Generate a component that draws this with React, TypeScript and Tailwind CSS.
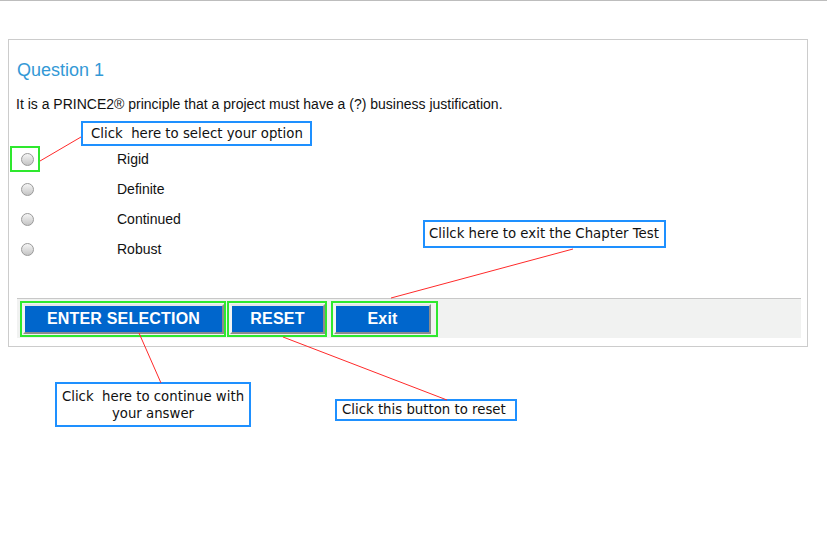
import React from "react";

const options = ["Rigid", "Definite", "Continued", "Robust"];

const callout =
  "absolute bg-white border-2 border-[#1e90ff] text-[13.3px] text-[#111] whitespace-pre font-['DejaVu_Sans',sans-serif]";

function Radio() {
  return (
    <span className="block w-[13px] h-[13px] rounded-full border border-[#9a9a9a] bg-linear-to-b from-[#f6f6f6] to-[#c4c4c4]" />
  );
}

function QuizButton({ label, width }: { label: string; width: string }) {
  return (
    <button
      className={`${width} h-[30px] bg-[#0066cc] text-white font-bold text-[16px] tracking-[0.2px] border-2 border-t-[#e6e6e6] border-l-[#f4f4f4] border-r-[#8c8c8c] border-b-[#8c8c8c] font-['Liberation_Sans',Arial,sans-serif] leading-none`}
    >
      {label}
    </button>
  );
}

export default function App() {
  return (
    <div className="relative w-[827px] h-[546px] bg-white border-t border-[#bdbdbd] overflow-hidden font-['Liberation_Sans',Arial,sans-serif]">
      <div className="ml-[8px] mt-[38px] w-[800px] h-[308px] border border-[#cccccc] pt-[19px] flex flex-col">
        <div className="pl-[8px] text-[18px] leading-[22px] text-[#3399d6]">Question 1</div>
        <div className="pl-[7px] mt-[15px] text-[14px] leading-[16px] text-[#111]">
          It is a PRINCE2® principle that a project must have a (?) business justification.
        </div>

        <div className="mt-[32px] flex flex-col">
          {options.map((o, i) => (
            <div key={o} className="h-[30px] flex items-center">
              <div
                className={`w-[30px] h-[26px] ml-[1px] flex items-center justify-center border-2 ${
                  i === 0 ? "border-[#2ee82e]" : "border-transparent"
                }`}
              >
                <span className="ml-[4px]">
                  <Radio />
                </span>
              </div>
              <span className="ml-[77px] text-[14px] text-[#111]">{o}</span>
            </div>
          ))}
        </div>

        <div className="mt-[34px] ml-[8px] mr-[6px] h-[40px] bg-[#f1f2f1] border-t border-[#c8c8c8] flex items-center pl-[3px]">
          <div className="w-[206px] h-[36px] border-2 border-[#2ee82e] flex items-center pl-[1px]">
            <QuizButton label="ENTER SELECTION" width="w-[201px]" />
          </div>
          <div className="ml-[1px] w-[100px] h-[36px] border-2 border-[#2ee82e] flex items-center pl-px">
            <QuizButton label="RESET" width="w-[96px]" />
          </div>
          <div className="ml-[4px] w-[107px] h-[36px] border-2 border-[#2ee82e] flex items-center pl-px">
            <QuizButton label="Exit" width="w-[97px]" />
          </div>
        </div>
      </div>

      <div className={`${callout} left-[81px] top-[120px] w-[231px] h-[25px] pl-[8px] leading-[21px]`}>
        {"Click  here to select your option"}
      </div>
      <div className={`${callout} left-[423px] top-[219px] w-[243px] h-[28px] pl-[4px] leading-[24px]`}>
        Clilck here to exit the Chapter Test
      </div>
      <div className={`${callout} left-[55px] top-[381px] w-[196px] h-[45px] text-center leading-[17px] pt-[4px]`}>
        {"Click  here to continue with\nyour answer"}
      </div>
      <div className={`${callout} left-[335px] top-[398px] w-[182px] h-[22px] pl-[5px] leading-[18px]`}>
        Click this button to reset
      </div>

      <svg className="absolute inset-0 pointer-events-none" width="827" height="546">
        <g stroke="#ff2a2a" strokeWidth="1">
          <line x1="40" y1="160" x2="81" y2="136" />
          <line x1="139" y1="332" x2="161" y2="382" />
          <line x1="283" y1="336" x2="447" y2="399" />
          <line x1="391" y1="297" x2="573" y2="248" />
        </g>
      </svg>
    </div>
  );
}
